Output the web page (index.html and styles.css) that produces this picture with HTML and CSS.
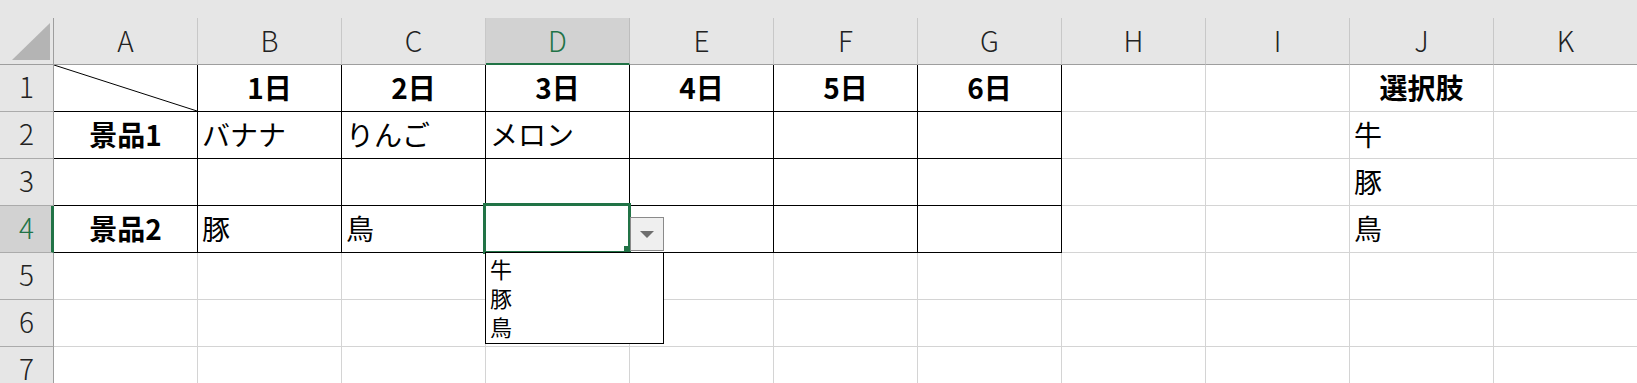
FILE: index.html
```html
<!DOCTYPE html>
<html lang="ja">
<head>
    <meta charset="UTF-8">
    <title>Sheet1</title>
    <link rel="stylesheet" href="styles.css">
</head>
<body>
    <div class="topband"></div>
    <div class="sheet">
        <!-- column headers -->
        <div class="corner">
            <svg width="53" height="46" viewBox="0 0 53 46"><polygon points="12,42 50,42 50,5" fill="#b4b4b4"/></svg>
        </div>
        <div class="hd">A</div>
        <div class="hd">B</div>
        <div class="hd">C</div>
        <div class="hd active">D</div>
        <div class="hd">E</div>
        <div class="hd">F</div>
        <div class="hd">G</div>
        <div class="hd">H</div>
        <div class="hd">I</div>
        <div class="hd">J</div>
        <div class="hd">K</div>

        <!-- row 1 -->
        <div class="rh">1</div>
        <div class="c t diag">
            <svg viewBox="0 0 100 100" preserveAspectRatio="none"><line x1="0" y1="0" x2="100" y2="100" stroke="#000" stroke-width="1" vector-effect="non-scaling-stroke"/></svg>
        </div>
        <div class="c t b">1日</div>
        <div class="c t b">2日</div>
        <div class="c t b">3日</div>
        <div class="c t b">4日</div>
        <div class="c t b">5日</div>
        <div class="c t b">6日</div>
        <div class="c"></div>
        <div class="c"></div>
        <div class="c b">選択肢</div>
        <div class="c"></div>

        <!-- row 2 -->
        <div class="rh">2</div>
        <div class="c t b">景品1</div>
        <div class="c t l">バナナ</div>
        <div class="c t l">りんご</div>
        <div class="c t l">メロン</div>
        <div class="c t"></div>
        <div class="c t"></div>
        <div class="c t"></div>
        <div class="c"></div>
        <div class="c"></div>
        <div class="c l">牛</div>
        <div class="c"></div>

        <!-- row 3 -->
        <div class="rh">3</div>
        <div class="c t"></div>
        <div class="c t"></div>
        <div class="c t"></div>
        <div class="c t"></div>
        <div class="c t"></div>
        <div class="c t"></div>
        <div class="c t"></div>
        <div class="c"></div>
        <div class="c"></div>
        <div class="c l">豚</div>
        <div class="c"></div>

        <!-- row 4 -->
        <div class="rh active">4</div>
        <div class="c t b">景品2</div>
        <div class="c t l">豚</div>
        <div class="c t l">鳥</div>
        <div class="c t current">
            <div class="selection"></div>
            <div class="dd-btn"><span class="arrow"></span></div>
            <ul class="dd-list">
                <li>牛</li>
                <li>豚</li>
                <li>鳥</li>
            </ul>
        </div>
        <div class="c t"></div>
        <div class="c t"></div>
        <div class="c t"></div>
        <div class="c"></div>
        <div class="c"></div>
        <div class="c l">鳥</div>
        <div class="c"></div>

        <!-- rows 5-7 -->
        <div class="rh">5</div>
        <div class="c"></div><div class="c"></div><div class="c"></div><div class="c"></div><div class="c"></div><div class="c"></div>
        <div class="c"></div><div class="c"></div><div class="c"></div><div class="c"></div><div class="c"></div>
        <div class="rh">6</div>
        <div class="c"></div><div class="c"></div><div class="c"></div><div class="c"></div><div class="c"></div><div class="c"></div>
        <div class="c"></div><div class="c"></div><div class="c"></div><div class="c"></div><div class="c"></div>
        <div class="rh">7</div>
        <div class="c"></div><div class="c"></div><div class="c"></div><div class="c"></div><div class="c"></div><div class="c"></div>
        <div class="c"></div><div class="c"></div><div class="c"></div><div class="c"></div><div class="c"></div>
    </div>
</body>
</html>
```

FILE: styles.css
```css
html, body {
    margin: 0;
    padding: 0;
    overflow: hidden;
    background-color: #ffffff;
    font-family: "Noto Sans CJK JP", "Noto Sans", sans-serif;
    color: #000;
}
.topband {
    height: 18px;
    background-color: #e6e6e6;
}
.sheet {
    display: grid;
    grid-template-columns: 54px repeat(11, 144px);
    grid-auto-rows: 47px;
    width: 1638px;
}
.sheet > div {
    box-sizing: border-box;
    display: flex;
    align-items: center;
    min-width: 0;
}
.corner {
    background-color: #e6e6e6;
    border-right: 1px solid #9e9e9e;
    border-bottom: 1px solid #9e9e9e;
}
.corner svg {
    display: block;
}
.hd {
    justify-content: center;
    background-color: #e6e6e6;
    border-right: 1px solid #c8c8c8;
    border-bottom: 1px solid #9e9e9e;
    font-size: 28px;
    font-weight: 300;
    color: #222;
    padding-bottom: 3px;
}
.hd.active {
    background-color: #d2d2d2;
    color: #217346;
    border-right-color: #bdbdbd;
    border-bottom: 2px solid #217346;
    padding-bottom: 2px;
}
.rh {
    justify-content: center;
    background-color: #e6e6e6;
    border-right: 1px solid #9e9e9e;
    border-bottom: 1px solid #ababab;
    font-size: 28px;
    font-weight: 300;
    color: #222;
    padding-bottom: 4px;
}
.rh.active {
    background-color: #d2d2d2;
    color: #217346;
    border-right: 3px solid #217346;
    padding-left: 2px;
}
.c {
    border-right: 1px solid #d4d4d4;
    border-bottom: 1px solid #d4d4d4;
    font-size: 28px;
    white-space: nowrap;
    padding-bottom: 2px;
}
.c.t {
    border-right-color: #000;
    border-bottom-color: #000;
}
.b {
    justify-content: center;
    font-weight: bold;
}
.l {
    padding-left: 4px;
}
.c.diag {
    padding-bottom: 0;
}
.diag svg {
    display: block;
    width: 100%;
    height: 100%;
}
.current {
    position: relative;
}
.selection {
    position: absolute;
    top: -3px;
    left: -3px;
    right: -2px;
    bottom: -2px;
    border: 3px solid #217346;
    z-index: 2;
}
.selection::after {
    content: "";
    position: absolute;
    right: -3px;
    bottom: -2px;
    width: 7px;
    height: 7px;
    background-color: #217346;
}
.dd-btn {
    position: absolute;
    left: 144px;
    top: 11px;
    width: 34px;
    height: 34px;
    box-sizing: border-box;
    border: 1px solid #8a8a8a;
    background-color: #efefef;
    display: flex;
    align-items: center;
    justify-content: center;
    z-index: 3;
}
.arrow {
    width: 0;
    height: 0;
    border-left: 7px solid transparent;
    border-right: 7px solid transparent;
    border-top: 7px solid #6e6e6e;
    margin-top: 1px;
}
.dd-list {
    position: absolute;
    left: -1px;
    top: 46px;
    width: 179px;
    height: 92px;
    box-sizing: border-box;
    margin: 0;
    padding: 1px 0 0 4px;
    list-style: none;
    border: 1px solid #000;
    background-color: #fff;
    z-index: 4;
}
.dd-list li {
    font-size: 22px;
    line-height: 29px;
}
```
